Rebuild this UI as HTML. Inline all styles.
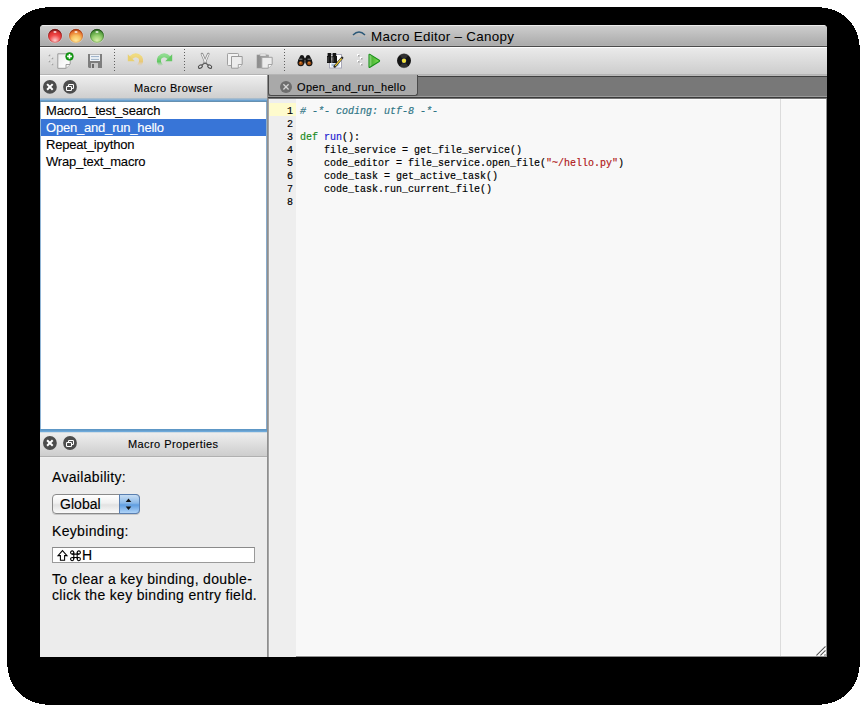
<!DOCTYPE html>
<html><head><meta charset="utf-8">
<style>
*{margin:0;padding:0;box-sizing:border-box}
html,body{width:867px;height:712px;overflow:hidden;background:#fff;font-family:"Liberation Sans",sans-serif}
div,svg{position:absolute}
.t{white-space:nowrap;color:#000;-webkit-text-stroke:0.12px currentColor}
#shadow{left:7px;top:7px;width:853px;height:698px;background:#000;border-radius:45px}
#win{left:40px;top:25px;width:787px;height:632px;background:#ececec;border-radius:4px 4px 0 0}
#title{left:40px;top:25px;width:787px;height:22px;background:linear-gradient(#ececec 0,#ececec 1px,#cdcdcd 1px,#ababab 20px,#b0b0b0 20px);border-bottom:1px solid #4a4a4a;border-radius:4px 4px 0 0}
.tl{width:14px;height:14px;border-radius:50%;top:29px}
#toolbar{left:40px;top:47px;width:787px;height:28px;background:linear-gradient(#fdfdfd 0,#fdfdfd 1px,#eaeaea 1px,#cdcdcd 27px,#b4b4b4 27px)}
.sep{width:1px;top:49px;height:23px;background:repeating-linear-gradient(#606060 0 1px,transparent 1px 3px)}
.item{left:41px;width:225px;height:17px;font-size:13px;letter-spacing:-0.2px;padding-left:5px;line-height:17px}
.pt{font-size:14px;letter-spacing:0.33px;color:#000;left:52px}
.code{font-family:"Liberation Mono",monospace;font-size:11.5px;line-height:13px;white-space:pre;color:#000;-webkit-text-stroke:0.2px currentColor;transform:scaleX(0.8696);transform-origin:0 0}
.gn{font-family:"Liberation Mono",monospace;font-size:11.5px;line-height:13px;left:268px;width:28.8px;text-align:right;color:#000;-webkit-text-stroke:0.2px currentColor;transform:scaleX(0.8696);transform-origin:0 0}
</style></head><body>
<svg style="left:0;top:0" width="867" height="712" shape-rendering="crispEdges"><path d="M812.00 7.00 L818.01 7.14 L822.67 7.55 L826.89 8.23 L830.80 9.18 L834.45 10.39 L837.85 11.87 L841.03 13.61 L843.98 15.60 L846.69 17.83 L849.17 20.31 L851.40 23.02 L853.39 25.97 L855.13 29.15 L856.61 32.55 L857.82 36.20 L858.77 40.11 L859.45 44.33 L859.86 48.99 L860.00 55.00 L860.00 657.00 L859.86 663.01 L859.45 667.67 L858.77 671.89 L857.82 675.80 L856.61 679.45 L855.13 682.85 L853.39 686.03 L851.40 688.98 L849.17 691.69 L846.69 694.17 L843.98 696.40 L841.03 698.39 L837.85 700.13 L834.45 701.61 L830.80 702.82 L826.89 703.77 L822.67 704.45 L818.01 704.86 L812.00 705.00 L55.00 705.00 L48.99 704.86 L44.33 704.45 L40.11 703.77 L36.20 702.82 L32.55 701.61 L29.15 700.13 L25.97 698.39 L23.02 696.40 L20.31 694.17 L17.83 691.69 L15.60 688.98 L13.61 686.03 L11.87 682.85 L10.39 679.45 L9.18 675.80 L8.23 671.89 L7.55 667.67 L7.14 663.01 L7.00 657.00 L7.00 55.00 L7.14 48.99 L7.55 44.33 L8.23 40.11 L9.18 36.20 L10.39 32.55 L11.87 29.15 L13.61 25.97 L15.60 23.02 L17.83 20.31 L20.31 17.83 L23.02 15.60 L25.97 13.61 L29.15 11.87 L32.55 10.39 L36.20 9.18 L40.11 8.23 L44.33 7.55 L48.99 7.14 L55.00 7.00 Z" fill="#000"/></svg>
<div id="win"></div>

<!-- title bar -->
<div id="title"></div>
<div class="t" style="left:371px;top:29px;font-size:13.4px;letter-spacing:0.3px;-webkit-text-stroke:0">Macro Editor – Canopy</div>

<!-- toolbar -->
<div id="toolbar"></div>
<div class="sep" style="left:114px"></div>
<div class="sep" style="left:184px"></div>
<div class="sep" style="left:284px"></div>

<!-- left panel: browser -->
<div style="left:40px;top:75px;width:227px;height:27px;background:linear-gradient(#fdfdfd 0,#fdfdfd 1px,#ededed 1px,#cfcfcf 23px,#a8bccc 23px,#a8bccc 24px,#8fb3d3 24px,#8fb3d3 25px,#68a0d0 25px,#68a0d0 26px,#6690b0 26px)"></div>
<div style="left:40px;top:102px;width:227px;height:327px;background:#fff;border-left:1px solid #90b4d4;border-right:1px solid #8aaccc"></div>
<div class="t item" style="top:102px">Macro1_test_search</div>
<div class="t item" style="top:119px;background:#3875d7;color:#fff">Open_and_run_hello</div>
<div class="t item" style="top:136px">Repeat_ipython</div>
<div class="t item" style="top:153px">Wrap_text_macro</div>
<div class="t" style="left:134px;top:82px;font-size:11px;letter-spacing:0.38px;color:#000">Macro Browser</div>

<!-- properties -->
<div style="left:40px;top:429px;width:227px;height:28px;background:linear-gradient(#5d97c6 0,#5d97c6 1px,#659dcb 1px,#659dcb 2px,#6eaadb 2px,#6eaadb 3px,#d0dce4 3px,#d0dce4 4px,#eeeeee 4px,#cdcdcd 27px,#b0b0b0 27px)"></div>
<div style="left:40px;top:457px;width:227px;height:200px;background:linear-gradient(#f0f0f0 0,#f0f0f0 1px,#ececec 1px)"></div>
<div class="t" style="left:128px;top:438px;font-size:11px;letter-spacing:0.42px;color:#000">Macro Properties</div>
<div class="t pt" style="top:469px">Availability:</div>
<div class="t pt" style="top:523px">Keybinding:</div>
<div class="t pt" style="top:571px;line-height:16px">To clear a key binding, double-<br>click the key binding entry field.</div>

<!-- divider -->
<div style="left:267px;top:75px;width:1px;height:582px;background:#8f8f8f"></div>

<!-- tab bar -->
<div style="left:268px;top:75px;width:559px;height:24px;background:linear-gradient(#bababa 0,#bababa 1px,#3f3f3f 1px,#3f3f3f 2px,#787878 2px,#787878 21px,#999 21px,#999 22px,#3b3b3b 22px,#3b3b3b 23px,#777 23px)"></div>
<div style="left:268px;top:75px;width:150px;height:21px;background:#a9a9a9;border-left:1px solid #4a4a4a;border-right:1px solid #4a4a4a;border-bottom:1px solid #4a4a4a;border-radius:0 0 3px 3px"></div>
<div class="t" style="left:297px;top:81px;font-size:11px;letter-spacing:0.34px">Open_and_run_hello</div>

<!-- editor -->
<div style="left:268px;top:99px;width:559px;height:558px;background:linear-gradient(#fdfdfd 0,#fdfdfd 1px,#f8f8f8 1px);border-right:1px solid #909090;border-bottom:1px solid #909090;box-shadow:inset -1px -1px 0 #fcfcfc"></div>
<div style="left:268px;top:99px;width:28px;height:558px;background:#eeeeee;border-left:1px solid #a5a5a5"></div>
<div style="left:269px;top:99px;width:1px;height:558px;background:#f2f2f2"></div>
<div style="left:269px;top:103px;width:27px;height:13px;background:#fefbcd"></div>
<div style="left:780px;top:99px;width:1px;height:557px;background:#dcdcdc"></div>

<!-- code -->
<div class="gn" style="top:104px">1<br>2<br>3<br>4<br>5<br>6<br>7<br>8</div>
<div class="code" style="left:300px;top:104px"><span style="color:#2f7585;font-style:italic"># -*- coding: utf-8 -*-</span>

<span style="color:#1a8a1a">def</span> <span style="color:#2020d0">run</span>():
    file_service = get_file_service()
    code_editor = file_service.open_file(<span style="color:#b01818">"~/hello.py"</span>)
    code_task = get_active_task()
    code_task.run_current_file()
</div>

<!-- properties widgets -->
<div style="left:52px;top:494px;width:88px;height:20px;border-radius:4px;border:1px solid #8a8a8a;background:linear-gradient(#ffffff,#f0f0f0 45%,#e2e2e2 55%,#fafafa);box-shadow:0 1px 0 rgba(0,0,0,0.15)"></div>
<div style="left:119px;top:494px;width:21px;height:20px;border-radius:0 4px 4px 0;border:1px solid #5a7fb0;background:linear-gradient(#c8def4,#8ab8e8 45%,#5f9de0 55%,#b0d4f8)"></div>
<svg style="left:123px;top:496px" width="12" height="16" viewBox="0 0 12 16"><path d="M5.5 2.4 L8.3 6 L2.7 6 Z M5.5 14 L8.3 10.4 L2.7 10.4 Z" fill="#111"/></svg>
<div class="t pt" style="left:60px;top:496px;letter-spacing:0.05px">Global</div>
<div style="left:52px;top:547px;width:203px;height:16px;background:#fff;border:1px solid #9a9a9a;border-top-color:#8a8a8a"></div>
<svg style="left:56px;top:548.7px" width="26" height="13" viewBox="0 0 26 13"><path d="M6.5 1.6 L11 6.6 H8.6 V11.2 H4.4 V6.6 H2 Z" fill="none" stroke="#000" stroke-width="1.05" stroke-linejoin="miter"/><g transform="translate(14.5 1.8)" fill="none" stroke="#000" stroke-width="1.1"><path d="M3.3 1.7 V8.3 M6.7 1.7 V8.3 M1.7 3.3 H8.3 M1.7 6.7 H8.3"/><circle cx="1.7" cy="1.7" r="1.6"/><circle cx="8.3" cy="1.7" r="1.6"/><circle cx="1.7" cy="8.3" r="1.6"/><circle cx="8.3" cy="8.3" r="1.6"/></g></svg>
<div class="t pt" style="left:82px;top:547px;font-size:14px;color:#000">H</div>

<svg style="left:0;top:0" width="867" height="712" viewBox="0 0 867 712">
<defs>
 <radialGradient id="gR" cx="50%" cy="85%" r="75%"><stop offset="0" stop-color="#ffd0d0"/><stop offset="0.55" stop-color="#f04848"/><stop offset="0.85" stop-color="#d83030"/><stop offset="1" stop-color="#902020"/></radialGradient>
 <radialGradient id="gO" cx="50%" cy="85%" r="80%"><stop offset="0" stop-color="#ffe898"/><stop offset="0.45" stop-color="#f8c060"/><stop offset="0.8" stop-color="#e87830"/><stop offset="1" stop-color="#a84010"/></radialGradient>
 <radialGradient id="gG" cx="50%" cy="85%" r="80%"><stop offset="0" stop-color="#d8f0a8"/><stop offset="0.45" stop-color="#98d070"/><stop offset="0.8" stop-color="#58a040"/><stop offset="1" stop-color="#2a6020"/></radialGradient>
 <linearGradient id="hl" x1="0" y1="0" x2="0" y2="1"><stop offset="0" stop-color="#fff" stop-opacity="0.95"/><stop offset="1" stop-color="#fff" stop-opacity="0"/></linearGradient>
 <linearGradient id="page" x1="0" y1="0" x2="1" y2="1"><stop offset="0" stop-color="#e8e8e8"/><stop offset="0.6" stop-color="#fafafa"/><stop offset="1" stop-color="#ffffff"/></linearGradient>
 <linearGradient id="undo" x1="0" y1="0" x2="0" y2="1"><stop offset="0" stop-color="#f0dc80"/><stop offset="0.6" stop-color="#e8c878"/><stop offset="1" stop-color="#e8c8a0" stop-opacity="0"/></linearGradient>
 <linearGradient id="redo" x1="0" y1="0" x2="0" y2="1"><stop offset="0" stop-color="#90dc90"/><stop offset="0.6" stop-color="#60c860"/><stop offset="1" stop-color="#80d080" stop-opacity="0"/></linearGradient>
 <linearGradient id="play" x1="0" y1="0" x2="1" y2="0"><stop offset="0" stop-color="#a8e098"/><stop offset="0.3" stop-color="#50b838"/><stop offset="1" stop-color="#80e050"/></linearGradient>
 <linearGradient id="clip" x1="0" y1="0" x2="1" y2="0"><stop offset="0" stop-color="#8a8a8a"/><stop offset="1" stop-color="#a8a8a8"/></linearGradient>
 <linearGradient id="popb" x1="0" y1="0" x2="0" y2="1"><stop offset="0" stop-color="#d8eafa"/><stop offset="0.45" stop-color="#a8d0f0"/><stop offset="0.5" stop-color="#78b4e8"/><stop offset="1" stop-color="#c0e2fc"/></linearGradient>
 <linearGradient id="popw" x1="0" y1="0" x2="0" y2="1"><stop offset="0" stop-color="#ffffff"/><stop offset="0.45" stop-color="#f0f0f0"/><stop offset="0.5" stop-color="#e2e2e2"/><stop offset="1" stop-color="#ffffff"/></linearGradient>
<linearGradient id="rimR" x1="0" y1="0" x2="0" y2="1"><stop offset="0" stop-color="#701010" stop-opacity="0.9"/><stop offset="1" stop-color="#b03030" stop-opacity="0.4"/></linearGradient>
 <linearGradient id="rimO" x1="0" y1="0" x2="0" y2="1"><stop offset="0" stop-color="#a03010" stop-opacity="0.9"/><stop offset="1" stop-color="#d07030" stop-opacity="0.3"/></linearGradient>
 <linearGradient id="rimG" x1="0" y1="0" x2="0" y2="1"><stop offset="0" stop-color="#204a18" stop-opacity="0.9"/><stop offset="1" stop-color="#408030" stop-opacity="0.4"/></linearGradient>
</defs>

<!-- traffic lights -->
<g>
 <circle cx="55" cy="35.8" r="7.6" fill="#fff" opacity="0.25"/>
 <circle cx="55" cy="35.8" r="6.9" fill="url(#gR)"/>
 <circle cx="55" cy="35.8" r="6.5" fill="none" stroke="url(#rimR)" stroke-width="0.9"/><ellipse cx="55" cy="31.9" rx="1.6" ry="1" fill="#fff" opacity="0.75"/>
 <circle cx="76" cy="35.8" r="7.6" fill="#fff" opacity="0.25"/>
 <circle cx="76" cy="35.8" r="6.9" fill="url(#gO)"/>
 <circle cx="76" cy="35.8" r="6.5" fill="none" stroke="url(#rimO)" stroke-width="0.9"/><ellipse cx="76" cy="31.9" rx="1.6" ry="1" fill="#fff" opacity="0.75"/>
 <circle cx="97" cy="35.8" r="7.6" fill="#fff" opacity="0.25"/>
 <circle cx="97" cy="35.8" r="6.9" fill="url(#gG)"/>
 <circle cx="97" cy="35.8" r="6.5" fill="none" stroke="url(#rimG)" stroke-width="0.9"/><ellipse cx="97" cy="31.9" rx="1.6" ry="1" fill="#fff" opacity="0.75"/>
</g>

<!-- grip dots -->
<g fill="#fff"><rect x="48" y="54" width="2" height="2"/><rect x="51" y="57" width="2" height="2"/><rect x="48" y="60" width="2" height="2"/><rect x="51" y="63" width="2" height="2"/></g>
<g fill="#a0a0a0"><rect x="48.5" y="54.5" width="1.7" height="1.7"/><rect x="51.5" y="57.5" width="1.7" height="1.7"/><rect x="48.5" y="60.5" width="1.7" height="1.7"/><rect x="51.5" y="63.5" width="1.7" height="1.7"/></g>

<!-- new doc -->
<path d="M57.8 53.8 H70.2 V64.2 L66 68.3 H57.8 Z" fill="url(#page)" stroke="#9a9a9a" stroke-width="1"/>
<path d="M66 68 V64.5 H70" fill="#f4f4f4" stroke="#8a8a8a" stroke-width="0.8"/>
<circle cx="69.5" cy="56.4" r="3.9" fill="#129a12" stroke="#0a7a0a" stroke-width="0.5"/>
<path d="M69.5 54 V58.8 M67.1 56.4 H71.9" stroke="#fff" stroke-width="1.6"/>

<!-- save -->
<path d="M88 54 H102 V68 H89 L88 67 Z" fill="#7e7e7e"/>
<rect x="90" y="54.5" width="10" height="6.5" fill="#eef2f6"/>
<path d="M91 56.6 H99 M91 59.4 H99" stroke="#9ab0c8" stroke-width="1"/>
<rect x="91" y="63" width="7" height="5" fill="#c8c8c8"/>
<rect x="92" y="64" width="2" height="4" fill="#6a6a6a"/>

<!-- undo -->
<path d="M131 57.6 Q136 52.8 140.3 57.5 Q142.6 61.5 138.6 66" fill="none" stroke="url(#undo)" stroke-width="4"/>
<path d="M127.8 54.3 L127.8 61.2 L134.8 61.2 Z" fill="#e8d070"/>
<!-- redo -->
<path d="M169 57.6 Q164 52.8 159.7 57.5 Q157.4 61.5 161.4 66" fill="none" stroke="url(#redo)" stroke-width="4"/>
<path d="M172.2 54.3 L172.2 61.2 L165.2 61.2 Z" fill="#64c864"/>

<!-- scissors -->
<path d="M202 54 L205.6 62.5 M208.3 54 L204.6 62.5" stroke="#8a8a8a" stroke-width="2.6" stroke-linecap="round"/>
<path d="M202 54.3 L205.6 62.5 M208.3 54.3 L204.6 62.5" stroke="#f4f4f4" stroke-width="1.1" stroke-linecap="round"/>
<path d="M205.1 62.8 L202 65 M205.1 62.8 L208.2 65" stroke="#606060" stroke-width="1.3"/>
<ellipse cx="200.4" cy="66.6" rx="2.1" ry="1.5" fill="#e8e8e8" stroke="#505050" stroke-width="1.2" transform="rotate(-35 200.4 66.6)"/>
<ellipse cx="209.7" cy="66.6" rx="2.1" ry="1.5" fill="#e8e8e8" stroke="#505050" stroke-width="1.2" transform="rotate(35 209.7 66.6)"/>

<!-- copy -->
<rect x="227.5" y="53.5" width="11" height="12" fill="#f2f2f2" stroke="#a0a0a0" stroke-width="1" rx="0.8"/>
<path d="M231.5 56.5 H242.2 V64.3 L238.3 68.2 H231.5 Z" fill="#ececec" stroke="#9a9a9a" stroke-width="1"/>
<path d="M238.3 68 V64.5 H242" fill="#f8f8f8" stroke="#909090" stroke-width="0.8"/>

<!-- paste -->
<rect x="257" y="55" width="11.5" height="13" fill="url(#clip)" stroke="#9a9a9a" stroke-width="0.6"/>
<rect x="260" y="54" width="6" height="2" fill="#f0f0f0" stroke="#aaa" stroke-width="0.5"/>
<path d="M261.8 57.3 H272.2 V64.3 L268.3 68.2 H261.8 Z" fill="#ececec" stroke="#a0a0a0" stroke-width="1"/>
<path d="M268.3 68 V64.5 H272" fill="#f8f8f8" stroke="#909090" stroke-width="0.8"/>

<!-- binoculars -->
<g>
 <path d="M297.6 63.5 Q297.4 60 299.4 57.5 L300.4 55.5 Q302 54.4 303.4 55.6 L304.4 57.5 Q305 60.5 304.6 63.5 Z" fill="#141414"/>
 <path d="M312.4 63.5 Q312.6 60 310.6 57.5 L309.6 55.5 Q308 54.4 306.6 55.6 L305.6 57.5 Q305 60.5 305.4 63.5 Z" fill="#141414"/>
 <circle cx="300.8" cy="63" r="3.2" fill="#141414"/>
 <circle cx="309.2" cy="63" r="3.2" fill="#141414"/>
 <circle cx="300.8" cy="63.2" r="2" fill="#9a4a10"/>
 <circle cx="309.2" cy="63.2" r="2" fill="#9a4a10"/>
 <circle cx="300.6" cy="62.6" r="0.9" fill="#e08838"/>
 <circle cx="309" cy="62.6" r="0.9" fill="#e08838"/>
 <path d="M299.2 59.2 h3.2 M307.6 59.2 h3.2" stroke="#8a8a8a" stroke-width="1"/>
 <circle cx="305" cy="59" r="0.9" fill="#000"/>
</g>

<!-- find/replace -->
<g>
 <rect x="329.5" y="54.5" width="12" height="13.5" fill="#fff" stroke="#a8a8b8" stroke-width="1"/>
 <rect x="331" y="63.5" width="8.5" height="3" fill="#c4dcf4"/>
 <path d="M332 65 h6" stroke="#7a8a9a" stroke-width="0.8"/>
 <path d="M327.6 53 h3.6 v3 h-3.6 z M332.6 53 h3.6 v3 h-3.6 z" fill="#151515"/>
 <path d="M327 56 h4.6 v7 h-4.6 z M332.2 56 h4.8 v7 h-4.8 z" fill="#151515"/>
 <rect x="331.6" y="57.5" width="0.6" height="3" fill="#ddd"/>
 <path d="M328 57 v5 M333.2 57 v5" stroke="#555" stroke-width="0.8"/>
 <path d="M334.6 66.6 L342.2 57.8" stroke="#2a2a2a" stroke-width="2.4" stroke-linecap="round"/>
 <path d="M335.2 65.8 L341.6 58.5" stroke="#f0cc38" stroke-width="1.2"/>
</g>

<!-- grip 2 -->
<g fill="#fff"><rect x="357" y="54" width="2" height="2"/><rect x="360" y="57" width="2" height="2"/><rect x="357" y="60" width="2" height="2"/><rect x="360" y="63" width="2" height="2"/></g>
<g fill="#a8a8a8"><rect x="358" y="55" width="1.6" height="1.6"/><rect x="361" y="58" width="1.6" height="1.6"/><rect x="358" y="61" width="1.6" height="1.6"/><rect x="361" y="64" width="1.6" height="1.6"/></g>

<!-- play -->
<path d="M369 54.8 L369 66.8 Q369 67.8 370 67.2 L379.2 61.5 Q380 60.8 379.2 60.2 L370 54.4 Q369 53.8 369 54.8 Z" fill="url(#play)" stroke="#189018" stroke-width="1.1"/>

<!-- record disc -->
<circle cx="404" cy="60.8" r="7" fill="#151515"/>
<path d="M404 60.8 L399.5 55 A7 7 0 0 1 408.5 55 Z" fill="#555" opacity="0.45"/>
<path d="M404 60.8 L408.5 66.6 A7 7 0 0 1 399.5 66.6 Z" fill="#555" opacity="0.45"/>
<circle cx="404" cy="60.8" r="3" fill="#101830"/>
<circle cx="404" cy="60.8" r="2.2" fill="#f0e040"/>

<!-- panel header buttons -->
<g>
 <circle cx="49.9" cy="86.9" r="6.9" fill="#4c4c4c"/>
 <path d="M47.1 84.1 L52.7 89.7 M52.7 84.1 L47.1 89.7" stroke="#fff" stroke-width="2"/>
 <circle cx="70" cy="86.9" r="6.9" fill="#4c4c4c"/>
 <rect x="68.5" y="84.5" width="5" height="4" rx="0.8" fill="none" stroke="#fff" stroke-width="1.05"/>
 <rect x="66.5" y="86.5" width="5" height="4" rx="0.8" fill="#4c4c4c" stroke="#fff" stroke-width="1.05"/>

 <circle cx="49.9" cy="443" r="6.9" fill="#4c4c4c"/>
 <path d="M47.1 440.2 L52.7 445.8 M52.7 440.2 L47.1 445.8" stroke="#fff" stroke-width="2"/>
 <circle cx="70" cy="443" r="6.9" fill="#4c4c4c"/>
 <rect x="68.5" y="440.5" width="5" height="4" rx="0.8" fill="none" stroke="#fff" stroke-width="1.05"/>
 <rect x="66.5" y="442.5" width="5" height="4" rx="0.8" fill="#4c4c4c" stroke="#fff" stroke-width="1.05"/>
</g>

<!-- tab close -->
<circle cx="286" cy="86.9" r="6" fill="#6e6e6e"/>
<path d="M283.4 84.3 L288.6 89.5 M288.6 84.3 L283.4 89.5" stroke="#d4d4d4" stroke-width="1.3"/>

<!-- canopy title icon -->
<path d="M353 35 Q359 29 365 35" fill="none" stroke="#2a5878" stroke-width="1.5"/>
<rect x="351.5" y="37" width="15" height="2.6" fill="#a8b8c4" opacity="0.55"/>

<!-- resize grip -->
<path d="M816.5 655.5 L825.5 646.5 M820.5 655.5 L825.5 650.5 M824.5 655.5 L825.5 654.5" stroke="#5a5a5a" stroke-width="1.1"/>
<path d="M817.5 655.8 L825.8 647.5 M821.5 655.8 L825.8 651.5" stroke="#ffffff" stroke-width="0.8"/>
</svg>
</body></html>
